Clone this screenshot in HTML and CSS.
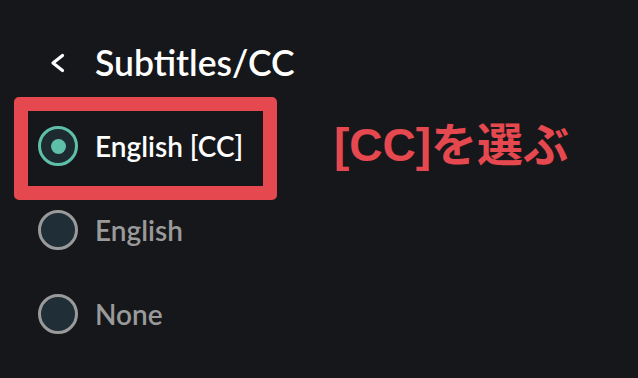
FILE: index.html
```html
<!DOCTYPE html>
<html lang="ja">
<head>
<meta charset="utf-8">
<title>Subtitles/CC</title>
<link rel="stylesheet" href="styles.css">
</head>
<body>
<div class="panel">
  <div class="header">
    <svg class="back" width="15" height="20" viewBox="0 0 15 20">
      <polyline points="12.5,2.5 3,10 12.5,17.5" fill="none" stroke="#ffffff" stroke-width="3.2" stroke-linecap="round" stroke-linejoin="round"/>
    </svg>
    <span class="title">Subtitles/CC</span>
  </div>
  <div class="list">
    <div class="row selected">
      <span class="radio"><span class="dot"></span></span>
      <span class="label">English [CC]</span>
    </div>
    <div class="row">
      <span class="radio"></span>
      <span class="label">English</span>
    </div>
    <div class="row">
      <span class="radio"></span>
      <span class="label">None</span>
    </div>
  </div>
  <div class="mark-box"></div>
  <div class="mark-note">[CC]を選ぶ</div>
</div>
</body>
</html>
```
FILE: styles.css
```css
html, body {
  margin: 0;
  padding: 0;
  background: #16171b;
}
.panel {
  position: relative;
  width: 638px;
  height: 378px;
  background: #16171b;
  font-family: Lato, "Open Sans", sans-serif;
  overflow: hidden;
}
.header {
  display: flex;
  align-items: center;
  height: 40px;
  margin-top: 43px;
  padding-left: 50px;
}
.back {
  display: block;
  margin-right: 30px;
}
.title {
  color: #ffffff;
  font-size: 35.5px;
  font-weight: 600;
  line-height: 40px;
}
.list {
  display: flex;
  flex-direction: column;
  margin-top: 21px;
}
.row {
  display: flex;
  align-items: center;
  height: 84px;
  padding-left: 38px;
  gap: 17px;
}
.radio {
  box-sizing: border-box;
  width: 40px;
  height: 40px;
  border-radius: 50%;
  border: 3px solid #9a9a9a;
  background: #1f2e37;
  display: flex;
  align-items: center;
  justify-content: center;
  flex: none;
}
.selected .radio {
  border-color: #5fc0a9;
  background: #1d2a30;
}
.dot {
  width: 15px;
  height: 15px;
  border-radius: 50%;
  background: #5fc0a9;
}
.label {
  color: #9a9a9a;
  font-size: 28px;
  font-weight: 600;
  line-height: 32px;
}
.selected .label {
  color: #ffffff;
}
.mark-box {
  position: absolute;
  left: 14px;
  top: 97px;
  width: 263px;
  height: 103px;
  box-sizing: border-box;
  border: 14px solid #e5484e;
  border-radius: 5px;
}
.mark-note {
  position: absolute;
  left: 334px;
  top: 115px;
  color: #e5484e;
  font-family: "Liberation Sans", "Noto Sans CJK JP", sans-serif;
  font-size: 46px;
  font-weight: 700;
  line-height: 60px;
  white-space: nowrap;
}
```
